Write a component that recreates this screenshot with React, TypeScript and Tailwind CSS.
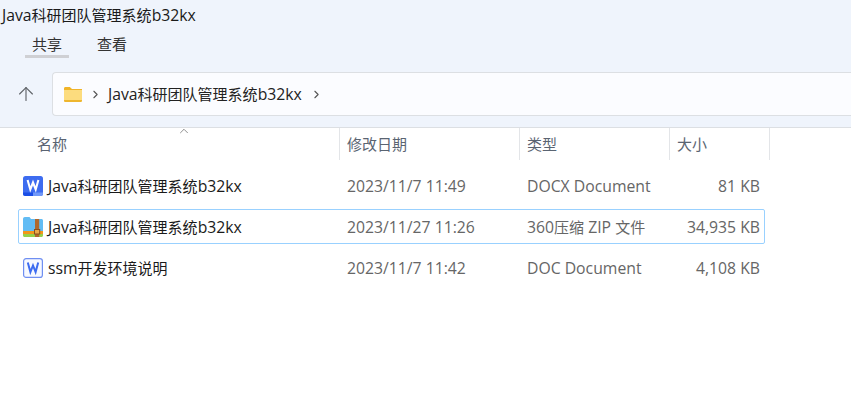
import { ArrowUp, ChevronRight, ChevronUp } from "lucide-react";

const font = "font-['Open_Sans','Noto_Sans_CJK_SC',sans-serif]";

// latin glyphs run a bit larger than the CJK ones in the reference
function Mixed({ text }: { text: string }) {
  const parts = text.split(/([\u4e00-\u9fff]+)/);
  return (
    <>
      {parts.map((p, i) =>
        i % 2 === 1 ? (
          <span key={i} className="text-[15px]">
            {p}
          </span>
        ) : (
          <span key={i}>{p}</span>
        ),
      )}
    </>
  );
}

function FolderIcon() {
  return (
    <svg width="18" height="15" viewBox="0 0 18 15">
      <path d="M0 1.500C0 .7.6 0 1.400 0h4.400L8 2h10v1H0z" fill="#f0b429" />
      <path d="M0 3h18v10.500c0 .8-.6 1.500-1.400 1.500H1.400C.6 15 0 14.300 0 13.500z" fill="#fcdc7e" />
      <path d="M0 13h18v.5c0 .8-.6 1.500-1.400 1.500H1.400C.6 15 0 14.300 0 13.500z" fill="#eeb62f" />
    </svg>
  );
}

function DocxIcon() {
  return (
    <svg width="20" height="20" viewBox="0 0 20 20">
      <rect width="20" height="20" rx="2.500" fill="#3d6cf0" />
      <path d="M0 16.500h10V20H2.500A2.500 2.500 0 0 1 0 17.500z" fill="#1a4de6" />
      <path d="M10 16.500h10v1a2.500 2.500 0 0 1-2.500 2.500H10z" fill="#7098f8" />
      <path d="M4.600 4l2.700 9.500L10 6.500l2.700 7L15.400 4" fill="none" stroke="#fff" strokeWidth="2.100" />
    </svg>
  );
}

function ZipIcon() {
  return (
    <svg width="20" height="20" viewBox="0 0 20 20">
      <path d="M0 2C0 .9.8 0 1.800 0h4.700L8 2h10.500c.8 0 1.500.7 1.500 1.500V14H0z" fill="#62bcf4" />
      <path d="M0 14h20v3H0z" fill="#f3971a" />
      <path d="M0 17h20v1.500c0 .8-.7 1.500-1.500 1.500h-17C.7 20 0 19.300 0 18.500z" fill="#97d04a" />
      <rect x="12" y="2" width="4.200" height="18" fill="#b0682c" />
      <rect x="11.500" y="12.500" width="5.200" height="4.500" fill="#e8a94a" stroke="#8a4f1e" strokeWidth="1" />
    </svg>
  );
}

function DocIcon() {
  return (
    <svg width="20" height="20" viewBox="0 0 20 20">
      <rect x=".6" y=".6" width="18.800" height="18.800" rx="2.500" fill="#f7f9ff" stroke="#6f8ff2" strokeWidth="1.200" />
      <path d="M4.800 4.500l2.600 9.500L10 7.500l2.600 6.500 2.600-9.500" fill="none" stroke="#3d6cf0" strokeWidth="2" />
    </svg>
  );
}

const files = [
  { icon: <DocxIcon />, name: "Java科研团队管理系统b32kx", date: "2023/11/7 11:49", type: "DOCX Document", size: "81 KB", selected: false },
  { icon: <ZipIcon />, name: "Java科研团队管理系统b32kx", date: "2023/11/27 11:26", type: "360压缩 ZIP 文件", size: "34,935 KB", selected: true },
  { icon: <DocIcon />, name: "ssm开发环境说明", date: "2023/11/7 11:42", type: "DOC Document", size: "4,108 KB", selected: false },
];

export default function App() {
  return (
    <div className={`${font} relative h-[401px] w-[851px] overflow-hidden bg-white text-[15.75px] leading-5`}>
      {/* top area */}
      <div className="h-[128px] border-b border-[#dcdfe3] bg-[#eff4fc]">
        <div className="flex h-[30px] items-center pl-[2px] text-[#1a1a1a]">
          <span><Mixed text="Java科研团队管理系统b32kx" /></span>
        </div>
        <div className="flex h-[31px] gap-[28px] pl-[25px] text-[15px]">
          <div className="flex h-[28px] flex-col items-center border-b-[3px] border-[#cfd0d4] px-[7px] pt-[4px] text-[#333]">共享</div>
          <div className="pt-[4px] text-[#333]">查看</div>
        </div>
        <div className="mt-[11px] flex items-center">
          <div className="flex w-[52px] justify-center pr-[1px] text-[#5f6368]">
            <ArrowUp size={22} strokeWidth={1.25} />
          </div>
          <div className="flex h-[44px] flex-1 items-center rounded-l-[4px] border border-r-0 border-[#dcdfe3] bg-[#fbfcff] pl-[11px]">
            <FolderIcon />
            <ChevronRight size={13} className="ml-[7px] text-[#555]" />
            <span className="ml-[6px] text-[#222]"><Mixed text="Java科研团队管理系统b32kx" /></span>
            <ChevronRight size={13} className="ml-[8px] text-[#555]" />
          </div>
        </div>
      </div>

      {/* sort arrow */}
      <ChevronUp size={14} strokeWidth={1.25} className="absolute left-[177px] top-[124px] text-[#666]" />

      {/* column headers */}
      <div className="grid h-[32px] w-[770px] grid-cols-[339px_180px_150px_101px] text-[15px] text-[#5a6472]">
        <div className="pl-[37px] pt-[6px]">名称</div>
        <div className="border-l border-[#e3e5e8] pl-[7px] pt-[6px]">修改日期</div>
        <div className="border-l border-[#e3e5e8] pl-[7px] pt-[6px]">类型</div>
        <div className="border-x border-[#e3e5e8] pl-[7px] pt-[6px]">大小</div>
      </div>

      {/* rows */}
      <div className="ml-[18px] mt-[8px] flex w-[747px] flex-col gap-[6px]">
        {files.map((f) => (
          <div
            key={f.date}
            className={`grid h-[35px] grid-cols-[322px_180px_150px_89px] items-center rounded-[2px] border ${
              f.selected ? "border-[#99d1ff]" : "border-transparent"
            }`}
          >
            <div className="flex items-center gap-[5px] pl-[4px] text-[#1a1a1a]">
              {f.icon}
              <span><Mixed text={f.name} /></span>
            </div>
            <div className="pl-[6px] text-[#666]">{f.date}</div>
            <div className="pl-[6px] text-[#666]"><Mixed text={f.type} /></div>
            <div className="text-right text-[#666]">{f.size}</div>
          </div>
        ))}
      </div>
    </div>
  );
}
